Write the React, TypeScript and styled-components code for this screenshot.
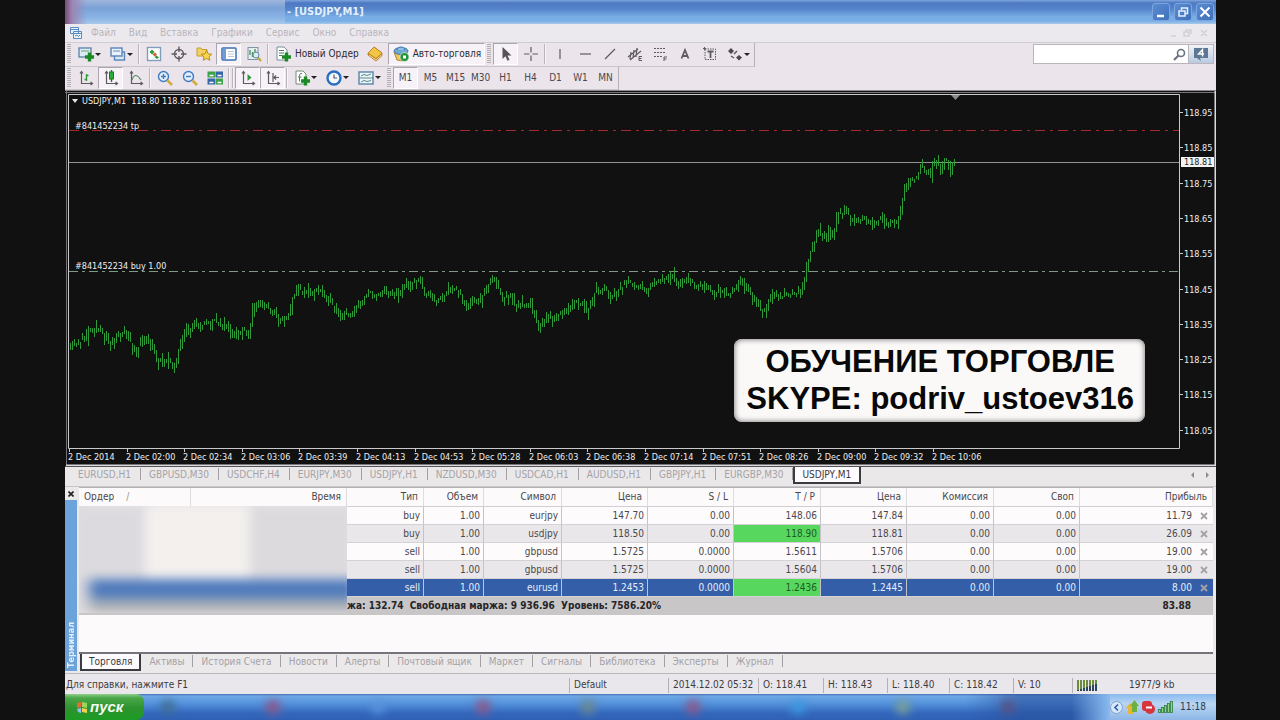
import React from "react";
import styled, { createGlobalStyle, css } from "styled-components";

const ui = `"DejaVu Sans Condensed", "DejaVu Sans", sans-serif`;

const GlobalStyle = createGlobalStyle`
  * { box-sizing: border-box; }
  body { margin: 0; background: #111; }
  button, input { font: inherit; color: inherit; }
`;

const Desktop = styled.div`
  min-height: 100vh;
  display: flex;
  flex-direction: column;
  padding: 0 64px 0 65px;
  background: #111112;
  font: 10px/14px ${ui};
  color: #4a474d;
`;

/* ---------- title bar and menu ---------- */

const TitleBar = styled.header`
  display: flex;
  align-items: center;
  height: 24px;
  padding-right: 2px;
  background: linear-gradient(#7ea5dc 0, #4d79c3 3px, #5584cb 9px, #79aee5 17px, #78afe6 21px, #a9c8ea 24px);
`;

const HiddenCaption = styled.div`
  width: 220px;
  height: 24px;
  background: linear-gradient(90deg, #7a4a78 0, #9c86b2 7px, transparent 22px),
    linear-gradient(#9fb6dc 0, #7ba1d8 8px, #8ab5e6 18px, #a9c8ea 24px);
`;

const Caption = styled.h1`
  flex: 1;
  margin: 0;
  padding-left: 2px;
  font: bold 11px/22px ${ui};
  color: #e4f0fd;
`;

const CaptionButton = styled.button`
  display: grid;
  place-items: center;
  width: 18px;
  height: 18px;
  margin-left: 4px;
  padding: 0;
  border: 1px solid #7da6df;
  border-radius: 3px;
  background: linear-gradient(135deg, #5b8bd2, #3f70bb);
`;

const MenuBar = styled.nav`
  display: flex;
  align-items: center;
  height: 19px;
  padding: 0 8px 0 4px;
  background: #ece9ee;
  border-bottom: 1px solid #cfccd2;
`;

const MenuItem = styled.button`
  margin-left: 3px;
  padding: 0 5px;
  border: 0;
  background: none;
  color: #b9b5bc;
  line-height: 16px;
`;

const ChildControls = styled.div`
  display: flex;
  gap: 8px;
  margin-left: auto;
  color: #d3d0d5;
`;

/* ---------- toolbars ---------- */

const ToolArea = styled.div`
  display: flex;
  justify-content: space-between;
  height: 48px;
  background: #ebe5eb;
  border-bottom: 1px solid #8d8a90;
`;

const ToolRows = styled.div`
  display: flex;
  flex-direction: column;
  align-items: flex-start;
`;

const ToolRow = styled.div`
  display: flex;
  align-items: center;
  height: 24px;
  border-right: 1px solid #b5b1b7;
  border-bottom: 1px solid #c9c5cb;
`;

const Grip = styled.span`
  width: 8px;
  height: 20px;
  border: solid #ebe5eb;
  border-width: 0 2px;
  background: repeating-linear-gradient(#b3afb5 0 1px, #ebe5eb 1px 2px);
`;

const Divider = styled.span`
  width: 2px;
  height: 20px;
  margin: 0 1px;
  border-left: 1px solid #b9b5bb;
  border-right: 1px solid #f8f5f9;
`;

const ToolButton = styled.button<{ $wide?: boolean; $pressed?: boolean }>`
  display: flex;
  align-items: center;
  justify-content: ${(p) => (p.$wide ? "flex-start" : "center")};
  width: ${(p) => (p.$wide ? 32 : 25)}px;
  height: 22px;
  padding: 0 0 0 ${(p) => (p.$wide ? 3 : 0)}px;
  border: 1px solid transparent;
  background: none;
  ${(p) =>
    p.$pressed &&
    css`
      background: #f6f2f7;
      border-color: #aaa6ad #fff #fff #aaa6ad;
    `}
`;

const LabelButton = styled(ToolButton)`
  width: auto;
  gap: 3px;
  padding: 0 3px;
  white-space: nowrap;
  color: #2e2b30;
`;

const Caret = styled.span`
  border: 3px solid transparent;
  border-top-color: #222;
  border-bottom: 0;
`;

const SearchGroup = styled.form`
  display: flex;
  align-items: center;
  height: 20px;
  margin: 1px 2px 0 0;
  background: #fff;
  border: 1px solid #b9b5bb;
`;

const SearchInput = styled.input`
  width: 137px;
  height: 18px;
  padding: 0 4px;
  border: 0;
  outline: 0;
  background: none;
`;

const SearchButton = styled.button`
  display: grid;
  place-items: center;
  width: 17px;
  height: 18px;
  padding: 0;
  border: 0;
  background: none;
`;

const NewsButton = styled(SearchButton)`
  width: 25px;
  border-left: 1px solid #b9b5bb;
  background: linear-gradient(#f1f3f8, #b9cbe2);
`;

/* ---------- chart ---------- */

const ChartPane = styled.section`
  position: relative;
  background: #111112;
`;

const ChartSvg = styled.svg`
  display: block;
  width: 100%;
  font: 9px ${ui};
`;

const Banner = styled.aside`
  position: absolute;
  right: 71px;
  bottom: 44px;
  padding: 4px 11px 5px 12px;
  border-radius: 8px;
  background: #fbf8f8;
  box-shadow: inset 0 0 5px 1px #8e8b8b;
  font: bold 31px/37px "Liberation Sans", Arial, sans-serif;
  color: #080808;
  text-align: center;
  white-space: nowrap;
`;

/* ---------- tabs ---------- */

const Tab = styled.button<{ $active?: boolean }>`
  position: relative;
  height: 15px;
  padding: 0 9px 0 8px;
  border: 0;
  background: none;
  line-height: 14px;
  white-space: nowrap;
  color: #a5a2a7;
  &::after {
    content: "";
    position: absolute;
    right: 0;
    top: 1px;
    height: 12px;
    border-right: 1px solid #a3a0a5;
  }
  ${(p) =>
    p.$active &&
    css`
      height: 17px;
      padding: 0 7px;
      background: #fdfbfd;
      border: solid #3d3b42;
      border-width: 0 2px 2px;
      color: #3c393f;
      &::after {
        content: none;
      }
    `}
`;

const ChartTabs = styled.div`
  display: flex;
  height: 21px;
  padding-left: 5px;
  background: #eae8e9;
  border-top: 1px solid #55535a;
  border-bottom: 1px solid #c8c6c8;
  & > ${Tab} {
    padding-right: 10px;
  }
  & > ${Tab}:last-of-type {
    padding-right: 8px;
  }
`;

const Scrollers = styled.div`
  display: flex;
  gap: 10px;
  margin: 4px 6px 0 auto;
`;

/* ---------- terminal ---------- */

const Terminal = styled.section`
  display: flex;
  height: 187px;
  background: #ebe9ea;
  border-bottom: 1px solid #bab8bb;
`;

const Rail = styled.div`
  display: flex;
  flex-direction: column;
  width: 12px;
  margin: 0 2px 2px 0;
`;

const RailClose = styled.button`
  display: grid;
  place-items: center;
  height: 13px;
  padding: 0;
  border: 0;
  background: none;
`;

const RailTitle = styled.h2`
  flex: 1;
  margin: 0;
  padding-top: 3px;
  background: #6ba3da;
  color: #e3effb;
  font: bold 9px/12px ${ui};
  writing-mode: vertical-rl;
  transform: rotate(180deg);
`;

const TerminalBody = styled.div`
  flex: 1;
  display: flex;
  flex-direction: column;
  min-width: 0;
  margin-right: 3px;
  border-top: 1px solid #b5b2b6;
`;

const TableArea = styled.div`
  position: relative;
  flex: 1;
  background: #fcfafa;
`;

const Table = styled.table`
  width: 100%;
  table-layout: fixed;
  border-collapse: separate;
  border-spacing: 0;
`;

const HeadCell = styled.th<{ $left?: boolean }>`
  height: 19px;
  padding: 0 5px;
  border-right: 1px solid #e0dde0;
  border-bottom: 1px solid #d2cfd2;
  font-weight: normal;
  text-align: ${(p) => (p.$left ? "left" : "right")};
  white-space: nowrap;
`;

const SortMark = styled.span`
  margin-left: 12px;
  color: #98959a;
`;

const Row = styled.tr<{ $selected?: boolean }>`
  background: #fdfbfc;
  &:nth-child(even) {
    background: #e9e7e9;
  }
  ${(p) =>
    p.$selected &&
    css`
      && {
        background: #355ea8;
      }
      color: #e6eefb;
    `}
`;

const Cell = styled.td<{ $hit?: boolean }>`
  height: 18px;
  padding: 0 3px;
  border-right: 1px solid #c6c3c7;
  border-bottom: 1px solid #d5d2d5;
  text-align: right;
  white-space: nowrap;
  ${(p) =>
    p.$hit &&
    css`
      background: #57d75d;
      color: #1d5b26;
    `}
  &:last-child {
    border-right: 0;
  }
`;

const ProfitLine = styled.div`
  display: flex;
  align-items: center;
  justify-content: flex-end;
  gap: 8px;
  padding-right: 2px;
`;

const CloseOrder = styled.button`
  display: grid;
  place-items: center;
  padding: 0;
  border: 0;
  background: none;
`;

const TotalCell = styled.td`
  height: 18px;
  padding: 0;
  background: #c8c6c7;
  color: #262428;
  font-weight: bold;
  white-space: nowrap;
`;

const TotalProfit = styled(TotalCell)`
  padding-right: 22px;
  text-align: right;
`;

const Redaction = styled.div`
  position: absolute;
  left: 0;
  top: 18px;
  width: 23.6%;
  height: 107px;
  overflow: hidden;
  background: #e6e3e6;
`;

const RedactionFill = styled.div`
  height: 100%;
  margin: 0 -6px;
  filter: blur(5px);
  background: linear-gradient(90deg, #dcdade 8px, transparent 24px),
    linear-gradient(
      transparent 70px,
      #5f86c3 75px,
      #4673b8 86px,
      #7b96be 93px,
      #a9adb4 97px,
      #b9b9ba 107px
    ),
    linear-gradient(90deg, #dcdade 0 68px, #f3f0ee 76px 172px, #dddade 182px);
`;

const TerminalTabs = styled.div`
  display: flex;
  height: 21px;
  padding-left: 1px;
  border-top: 2px solid #76737a;
`;

/* ---------- status bar ---------- */

const StatusBar = styled.footer`
  display: flex;
  align-items: center;
  height: 20px;
  padding-top: 2px;
  background: #e9e7ec;
  color: #3d3b40;
`;

const StatusCell = styled.div<{ $width?: number }>`
  display: flex;
  align-items: center;
  height: 15px;
  flex: ${(p) => (p.$width ? `0 0 ${p.$width}px` : "1")};
  padding-left: ${(p) => (p.$width ? 4 : 1)}px;
  border-left: ${(p) => (p.$width ? "1px solid #b4b1b6" : "0")};
  white-space: nowrap;
`;

/* ---------- task bar ---------- */

const TaskBar = styled.div`
  display: flex;
  height: 26px;
  background: linear-gradient(#4470b4 0, #6fa8e6 2px, #5593dc 9px, #3468bd 19px, #2f60b4 26px);
`;

const StartButton = styled.button`
  display: flex;
  align-items: center;
  gap: 3px;
  width: 79px;
  padding: 0 0 0 12px;
  border: 0;
  border-radius: 0 8px 8px 0;
  background: linear-gradient(#8fce8b 0, #4aa748 4px, #2e9230 14px, #1b9c22 26px);
  color: #f3fbf0;
  font: italic bold 15px/24px "Liberation Sans", Arial, sans-serif;
`;

const TaskItems = styled.div`
  display: flex;
  flex: 1;
  align-items: center;
  gap: 91px;
  padding-left: 17px;
  overflow: hidden;
  background: linear-gradient(90deg, transparent 85%, #27509c99 91%, #27509c99 96%, #8abaf0 100%);
`;

const TaskBlur = styled.span<{ $color: string }>`
  flex: none;
  width: 14px;
  height: 14px;
  border-radius: 7px;
  background: ${(p) => p.$color};
  filter: blur(5px);
`;

const Tray = styled.div`
  display: flex;
  align-items: center;
  gap: 3px;
  padding-right: 10px;
  background: linear-gradient(#8abaf0, #b9d6f3 10px, #8db6e6 26px);
  color: #2c3a52;
`;

const TrayClock = styled.time`
  margin-left: 4px;
`;

/* ---------- icons ---------- */

const Icon = ({ children, size = 18 }: { children: React.ReactNode; size?: number }) => (
  <svg width={size} height={size} viewBox="0 0 18 18" fill="none" stroke="#5d5a60" strokeWidth="1.4" aria-hidden="true">
    {children}
  </svg>
);

const plus = <path d="M12.5 7.5v9M8 12h9" stroke="#1b8a25" strokeWidth="3.4" />;
const axes = <path d="M4.5 3v11.500H15M3 4.500l1.500-2 1.500 2M13.500 13l2 1.500-2 1.500" strokeWidth="1.200" />;

const icons: Record<string, React.ReactNode> = {
  newChart: <Icon><rect x="2" y="3" width="12" height="9" fill="#dcebf8" stroke="#6189ac" /><path d="M4 6h8" stroke="#8fb48f" />{plus}</Icon>,
  profiles: <Icon><rect x="5.500" y="7" width="10" height="8" fill="#dbe8f5" stroke="#5b84b5" /><rect x="2" y="3" width="11" height="8" fill="#eaf2fb" stroke="#5b84b5" /><path d="M4 6h7" stroke="#8aa9cc" /></Icon>,
  market: <Icon><rect x="2.500" y="2.500" width="13" height="13" fill="#fff" stroke="#7f9dbd" /><path d="M4.500 7l2.500-2.500L9.500 7 7 9.500z" fill="#2c9a3a" stroke="none" /><path d="M7.500 9.500l2.500-2 2 2-2 2z" fill="#d65a34" stroke="none" /><path d="M9.500 12l2-1.500 2.500 2-2 1.500z" fill="#2c9a3a" stroke="none" /></Icon>,
  crosshair: <Icon><circle cx="9" cy="9" r="4.500" /><path d="M9 1.500v5.500M9 11v5.500M1.500 9H7M11 9h5.500" /></Icon>,
  navigator: <Icon><path d="M2 3h4l1 1.500h5V11H2z" fill="#f3d264" stroke="#c99d2a" strokeWidth="1" /><path d="M11.500 5.500l1.600 3.300 3.600.4-2.600 2.500.7 3.600-3.300-1.800-3.300 1.800.7-3.600-2.600-2.500 3.600-.4z" fill="#f7d548" stroke="#b98d1f" strokeWidth="1" /></Icon>,
  terminal: <Icon><rect x="2" y="3" width="14" height="12" rx="1" fill="#fff" stroke="#3a6fb4" strokeWidth="1.500" /><path d="M3 3.500h3v11H3z" fill="#6d9cd6" stroke="none" /><path d="M8 6.500h6M8 9h6M8 11.500h6" stroke="#b8c6d6" strokeWidth="1" /></Icon>,
  tester: <Icon><rect x="3" y="2.500" width="10" height="12" fill="#e8eef0" stroke="#7f95a5" strokeWidth="1" /><path d="M5 5v5M7.500 7v5M10 4v4" stroke="#4c9a63" /><circle cx="11" cy="10" r="3" stroke="#5f88a8" fill="#dbeaf4" strokeWidth="1" /><path d="M13 12.500l3 3.500" stroke="#c4a23c" strokeWidth="2" /></Icon>,
  newOrder: <Icon><path d="M3 2h7l3 3v10H3z" fill="#fff" stroke="#7b8c9c" strokeWidth="1" /><path d="M5 5.500h5M5 8h5M5 10.500h3" stroke="#4f7c60" strokeWidth="1" />{plus}</Icon>,
  editor: <Icon><path d="M2 10V8l6-6 8 6v2.500L10 16z" fill="#c98a1e" stroke="#a9741b" strokeWidth=".8" /><path d="M2 8l6-6 8 6-6 5.500z" fill="#f3c545" stroke="#b98222" strokeWidth=".8" /><path d="M3 10l7 5 5.500-5" stroke="#fff0b2" strokeWidth=".8" /></Icon>,
  auto: <Icon><path d="M2 7l3 8 6 1 4-9" fill="#e9c659" stroke="#b3872c" strokeWidth="1" /><ellipse cx="9" cy="6" rx="7" ry="3.500" fill="#6fa9d4" stroke="#3b78a8" strokeWidth="1" /><path d="M5 5c1-4 7-4 8 0" fill="#8cc0e4" stroke="#3b78a8" strokeWidth="1" /><circle cx="12.500" cy="12" r="4.500" fill="#23943a" stroke="#fff" strokeWidth=".6" /><rect x="11" y="10.500" width="3" height="3" fill="#fff" stroke="none" /></Icon>,
  cursor: <Icon><path d="M5.500 2v12l3-2.800 2 4.600 2-1-2-4.300h4z" fill="#55525a" stroke="none" /></Icon>,
  cross: <Icon><path d="M9 2v5.500M9 10.500V16M2 9h5.500M10.500 9H16" strokeWidth="1.200" /></Icon>,
  vline: <Icon><path d="M9 4v10" strokeWidth="1.200" /></Icon>,
  hline: <Icon><path d="M4 9h11" strokeWidth="1.200" /></Icon>,
  trend: <Icon><path d="M4 14L14 4" strokeWidth="1.200" /></Icon>,
  channel: <Icon><path d="M2 12l10-8M4 15l11-9M5 7l-1 7M8 5l-1 8M11 3l-1 9" strokeWidth="1.200" /><path d="M16 11.500h-3v4h3M13 13.500h2.500" strokeWidth="1" /></Icon>,
  fibo: <Icon><path d="M3 3.500h12M3 7.500h12M3 11.500h8" strokeDasharray="2 1" strokeWidth="1.200" /><path d="M13 16v-4h3M13 14h2.500" strokeWidth="1" /></Icon>,
  text: <Icon><path d="M5.500 13.500L9 5l3.500 8.500M6.800 11h4.400" strokeWidth="1.800" /></Icon>,
  label: <Icon><rect x="4" y="4" width="10.500" height="10.500" strokeDasharray="1.500 1" strokeWidth="1" /><path d="M6.500 6.500h6M9.500 6.500v6.500" strokeWidth="1.800" /><path d="M2 3.500h3M3.500 2v3" strokeWidth="1" /></Icon>,
  arrows: <Icon><path d="M5 3l3 3-3 3-3-3zM13 10l3 2.500-3 3-3-3z" fill="#4b484e" stroke="none" /><path d="M8 9l3-3M5 11l3 2" strokeWidth="1.500" /></Icon>,
  bars: <Icon>{axes}<path d="M9.500 5v7M7.500 10.500h2M9.500 6.500h2" stroke="#2c9a3a" /></Icon>,
  candles: <Icon>{axes}<path d="M9.500 1v12" stroke="#1b7a25" /><rect x="7.500" y="3" width="4" height="7" fill="#2cab3a" stroke="#1b7a25" strokeWidth="1" /></Icon>,
  line: <Icon>{axes}<path d="M5 11c2-6 5-6 9 0" stroke="#5c8a66" strokeWidth="1.200" /></Icon>,
  zoomIn: <Icon><circle cx="7.500" cy="7.500" r="5" fill="#e2eefb" stroke="#3f7cc2" /><path d="M7.500 5v5M5 7.500h5" stroke="#3f7cc2" /><path d="M11.500 11.500l4.500 4.500" stroke="#d3aa3c" strokeWidth="2.500" /></Icon>,
  zoomOut: <Icon><circle cx="7.500" cy="7.500" r="5" fill="#e2eefb" stroke="#3f7cc2" /><path d="M5 7.500h5" stroke="#3f7cc2" /><path d="M11.500 11.500l4.500 4.500" stroke="#d3aa3c" strokeWidth="2.500" /></Icon>,
  tile: <Icon><path d="M1.500 2.500H9v6H1.500zM9.500 9.500H17v6H9.500z" fill="#3da04a" stroke="none" /><path d="M9.500 2.500H17v6H9.500zM1.500 9.500H9v6H1.500z" fill="#3767a8" stroke="none" /><path d="M3.500 6.500h4M11.500 6.500h4M3.500 13.500h4M11.500 13.500h4" stroke="#fff" strokeWidth="1.500" /></Icon>,
  scroll: <Icon>{axes}<path d="M8.500 5v7l4-3.500z" fill="#2c9a3a" stroke="none" /></Icon>,
  shift: <Icon>{axes}<path d="M9 4v9M10 8.500h5M12 6.500l-2 2 2 2" strokeWidth="1.200" /></Icon>,
  indicators: <Icon><path d="M3 2h7l3 3v10H3z" fill="#fff" stroke="#6e8d76" strokeWidth="1" /><path d="M9 4.500c-2-.5-2.500 1-2.500 3v5M5 8h3.500" stroke="#4f7c60" strokeWidth="1" />{plus}</Icon>,
  clock: <Icon><circle cx="9" cy="9" r="6.500" fill="#f4f9ff" stroke="#2b6fc0" strokeWidth="2.400" /><path d="M9 5.500V9h3" strokeWidth="1.200" /></Icon>,
  template: <Icon><rect x="2" y="3" width="14" height="12" fill="#eef5fb" stroke="#5a86a8" /><path d="M2 9h14M4 7l3-1.500 3 1 4-1.500M4 13l3-1.500 3 1 4-1" stroke="#5a8a8a" strokeWidth="1" /></Icon>,
};

type Tool = { id: string; label: string; wide?: boolean; pressed?: boolean };
const t = (id: string, label: string, opts: Partial<Tool> = {}): Tool => ({ id, label, ...opts });

const Tools = ({ items }: { items: Tool[] }) => (
  <>
    {items.map((i) => (
      <ToolButton key={i.id} aria-label={i.label} $wide={i.wide} $pressed={i.pressed}>
        {icons[i.id]}
        {i.wide && <Caret />}
      </ToolButton>
    ))}
  </>
);

const periods = ["M1", "M5", "M15", "M30", "H1", "H4", "D1", "W1", "MN"];

/* ---------- chart data ---------- */

const path: [number, number][] = [
  [70, 352], [75, 343], [81, 342], [87, 338], [90, 331], [97, 329], [105, 333], [113, 343], [120, 335], [127, 331],
  [132, 342], [138, 352], [143, 342], [148, 342], [155, 352], [160, 362], [168, 360], [174, 367], [178, 358],
  [185, 335], [193, 328], [197, 321], [203, 325], [213, 322], [223, 323], [230, 329], [234, 337], [240, 331],
  [251, 333], [253, 313], [258, 303], [268, 306], [275, 313], [282, 320], [291, 315], [294, 295], [300, 291],
  [310, 292], [325, 292], [332, 303], [340, 315], [353, 314], [360, 305], [367, 295], [393, 293], [400, 293],
  [408, 284], [421, 281], [427, 295], [440, 300], [447, 295], [455, 289], [460, 292], [468, 305], [475, 300],
  [479, 306], [483, 295], [495, 277], [503, 297], [513, 298], [518, 308], [530, 303], [537, 318], [542, 328],
  [547, 320], [555, 317], [567, 313], [573, 303], [583, 305], [588, 313], [597, 290], [607, 290], [614, 297],
  [622, 288], [628, 283], [640, 285], [648, 290], [657, 282], [668, 280], [673, 273], [678, 283], [685, 278],
  [697, 287], [705, 283], [717, 293], [730, 293], [745, 283], [755, 298], [765, 313], [773, 295], [785, 297],
  [800, 293], [805, 283], [807, 268], [813, 250], [821, 230], [827, 238], [830, 230], [835, 237], [837, 217],
  [846, 210], [853, 220], [865, 217], [872, 225], [882, 220], [890, 225], [898, 225], [903, 202], [907, 182],
  [913, 177], [918, 178], [922, 165], [927, 173], [932, 175], [934, 160], [939, 162], [942, 172], [947, 158],
  [952, 172], [954, 163],
];

const priceAt = (x: number) => {
  const i = Math.max(1, path.findIndex((p) => p[0] >= x));
  const [x0, y0] = path[i - 1];
  const [x1, y1] = path[i];
  return y0 + ((y1 - y0) * (x - x0)) / (x1 - x0);
};

const buildBars = () => {
  let seed = 11;
  const rnd = () => (seed = (seed * 16807) % 2147483647) / 2147483647;
  let d = "";
  for (let x = 70; x <= 954; x += 2) {
    const drift = (rnd() - 0.5) * 6;
    const a = priceAt(x) + drift;
    const b = priceAt(Math.min(954, x + 2)) + drift;
    const hi = Math.min(a, b) - 1 - rnd() * rnd() * 9;
    const lo = Math.max(a, b) + 1 + rnd() * rnd() * 9;
    d += `M${x}.5 ${Math.round(hi)}V${Math.round(lo)}`;
  }
  return d;
};
const bars = buildBars();

const prices = ["118.95", "118.85", "118.75", "118.65", "118.55", "118.45", "118.35", "118.25", "118.15", "118.05"];
const times = ["2014", "02:00", "02:34", "03:06", "03:39", "04:13", "04:53", "05:28", "06:03", "06:38", "07:14", "07:51", "08:26", "09:00", "09:32", "10:06"];

const Chart = () => (
  <ChartSvg viewBox="65 91 1151 375" role="img" aria-label="USDJPY M1">
    <rect x="65" y="91" width="1151" height="375" fill="#111112" />
    <path d="M66.500 91V466M65 92.500H1216" stroke="#77757a" fill="none" />
    <path d="M1215.500 91V465.500H66" stroke="#dcdadd" strokeWidth="2" fill="none" />
    <path d="M68.500 94.500H1179.500V448.500H68.500Z" stroke="#c9c8ca" fill="none" />
    <path d="M69 130.500H1179" stroke="#a52a30" strokeDasharray="10 5 3 5" />
    <path d="M69 162.500H1179" stroke="#8f9391" />
    <path d="M69 271.500H1179" stroke="#7c9a84" strokeDasharray="9 4 3 4" />
    <path d={bars} stroke="#309a3a" fill="none" />
    <path d="M72 99h6l-3 4z" fill="#e8e8e8" />
    <path d="M951 95h9l-4.500 5z" fill="#8b8b8d" />
    <g fill="#eeeeee">
      <text x="82" y="104">USDJPY,M1&nbsp; 118.80 118.82 118.80 118.81</text>
      <text x="75" y="129">#841452234 tp</text>
      <text x="75" y="269">#841452234 buy 1.00</text>
      {prices.map((p, i) => (
        <text key={p} x="1184" y={116 + Math.round(i * 35.3)}>{p}</text>
      ))}
      {times.map((s, i) => (
        <text key={s} x={68 + Math.round(i * 57.6)} y="460">2 Dec {s}</text>
      ))}
    </g>
    {prices.map((p, i) => (
      <path key={p} d={`M1180 ${112.5 + Math.round(i * 35.3)}h3`} stroke="#c9c8ca" />
    ))}
    {times.map((s, i) => (
      <path key={s} d={`M${69.5 + Math.round(i * 57.6)} 449v3`} stroke="#c9c8ca" />
    ))}
    <rect x="1181" y="157" width="33" height="10" fill="#f2f2f2" />
    <text x="1184" y="165" fill="#222">118.81</text>
  </ChartSvg>
);

/* ---------- terminal data ---------- */

const columns: [string, number][] = [
  ["Ордер", 112], ["Время", 156], ["Тип", 77], ["Объем", 60], ["Символ", 78], ["Цена", 86], ["S / L", 86],
  ["T / P", 87], ["Цена", 86], ["Комиссия", 87], ["Своп", 86], ["Прибыль", 133],
];

const orders = [
  { cells: ["buy", "1.00", "eurjpy", "147.70", "0.00", "148.06", "147.84", "0.00", "0.00"], profit: "11.79" },
  { cells: ["buy", "1.00", "usdjpy", "118.50", "0.00", "118.90", "118.81", "0.00", "0.00"], profit: "26.09", hit: true },
  { cells: ["sell", "1.00", "gbpusd", "1.5725", "0.0000", "1.5611", "1.5706", "0.00", "0.00"], profit: "19.00" },
  { cells: ["sell", "1.00", "gbpusd", "1.5725", "0.0000", "1.5604", "1.5706", "0.00", "0.00"], profit: "19.00" },
  { cells: ["sell", "1.00", "eurusd", "1.2453", "0.0000", "1.2436", "1.2445", "0.00", "0.00"], profit: "8.00", hit: true, selected: true },
];

const OrdersTable = () => (
  <Table>
    <colgroup>
      {columns.map(([, w], i) => (
        <col key={i} width={w} />
      ))}
    </colgroup>
    <thead>
      <tr>
        {columns.map(([name], i) => (
          <HeadCell key={i} $left={i === 0}>
            {name}
            {i === 0 && <SortMark>/</SortMark>}
          </HeadCell>
        ))}
      </tr>
    </thead>
    <tbody>
      {orders.map((o, r) => (
        <Row key={r} $selected={o.selected}>
          <Cell />
          <Cell />
          {o.cells.map((c, i) => (
            <Cell key={i} $hit={o.hit && i === 5}>{c}</Cell>
          ))}
          <Cell>
            <ProfitLine>
              {o.profit}
              <CloseOrder aria-label="Закрыть ордер">
                <svg width="8" height="8" viewBox="0 0 8 8" stroke="#a5a2a7" strokeWidth="1.800"><path d="M1 1l6 6M7 1L1 7" /></svg>
              </CloseOrder>
            </ProfitLine>
          </Cell>
        </Row>
      ))}
      <tr>
        <TotalCell colSpan={2} />
        <TotalCell colSpan={9}>жа: 132.74&nbsp; Свободная маржа: 9 936.96&nbsp; Уровень: 7586.20%</TotalCell>
        <TotalProfit>83.88</TotalProfit>
      </tr>
    </tbody>
  </Table>
);

const chartTabs = ["EURUSD,H1", "GBPUSD,M30", "USDCHF,H4", "EURJPY,M30", "USDJPY,H1", "NZDUSD,M30", "USDCAD,H1", "AUDUSD,H1", "GBPJPY,H1", "EURGBP,M30", "USDJPY,M1"];
const terminalTabs = ["Торговля", "Активы", "История Счета", "Новости", "Алерты", "Почтовый ящик", "Маркет", "Сигналы", "Библиотека", "Эксперты", "Журнал"];
const statusCells: [string, number][] = [["Default", 99], ["2014.12.02 05:32", 90], ["O: 118.41", 65], ["H: 118.43", 64], ["L: 118.40", 62], ["C: 118.42", 64], ["V: 10", 59]];
const taskColors = ["#3f6c8c", "#96527f", "#5b93dc", "#96527f", "#6f8a86", "#96527f", "#3b9be2", "#7fa28e", "#5a4f7c"];

export default function App() {
  return (
    <Desktop>
      <GlobalStyle />
      <TitleBar>
        <HiddenCaption />
        <Caption>- [USDJPY,M1]</Caption>
        <CaptionButton aria-label="Свернуть">
          <svg width="12" height="12" stroke="#fff" strokeWidth="2.500"><path d="M2 10h7" /></svg>
        </CaptionButton>
        <CaptionButton aria-label="Восстановить">
          <svg width="12" height="12" stroke="#e6f0fc" strokeWidth="1.500" fill="none"><path d="M4.500 4V2h6v5.500H8M2 5h6v5H2z" /></svg>
        </CaptionButton>
        <CaptionButton aria-label="Закрыть">
          <svg width="12" height="12" stroke="#fff" strokeWidth="2"><path d="M1.500 1.500l9 9M10.500 1.500l-9 9" /></svg>
        </CaptionButton>
      </TitleBar>

      <MenuBar>
        <svg width="14" height="14" viewBox="0 0 14 14" fill="#eaf2fb" stroke="#5b8ac2" aria-hidden="true">
          <path d="M1.500 1.500h8v6h-8zM4.500 5.500h8v7h-8zM1.500 3.500h8M4.500 7.500h8M6 10l2-1 1.500 1.500L11 9" />
        </svg>
        {["Файл", "Вид", "Вставка", "Графики", "Сервис", "Окно", "Справка"].map((m) => (
          <MenuItem key={m}>{m}</MenuItem>
        ))}
        <ChildControls>
          <svg width="38" height="8" fill="none" stroke="#d3d0d5" strokeWidth="1.500" aria-hidden="true">
            <path d="M1 7h5M16 3V1h5v4M14 3h5v4h-5zM31 1l6 6M37 1l-6 6" />
          </svg>
        </ChildControls>
      </MenuBar>

      <ToolArea>
        <ToolRows>
          <ToolRow>
            <Grip />
            <Tools items={[t("newChart", "Новый график", { wide: true }), t("profiles", "Профили", { wide: true })]} />
            <Divider />
            <Tools items={[t("market", "Обзор рынка"), t("crosshair", "Окно данных"), t("navigator", "Навигатор"), t("terminal", "Терминал", { pressed: true }), t("tester", "Тестер")]} />
            <Divider />
            <LabelButton>{icons.newOrder}Новый Ордер</LabelButton>
            <Tools items={[t("editor", "Редактор")]} />
            <LabelButton $pressed>{icons.auto}Авто-торговля</LabelButton>
            <Grip />
            <Tools items={[t("cursor", "Курсор", { pressed: true }), t("cross", "Перекрестие")]} />
            <Divider />
            <Tools items={[t("vline", "Вертикальная линия"), t("hline", "Горизонтальная линия"), t("trend", "Трендовая линия"), t("channel", "Канал"), t("fibo", "Фибоначчи"), t("text", "Текст"), t("label", "Метка"), t("arrows", "Стрелки", { wide: true })]} />
          </ToolRow>
          <ToolRow>
            <Grip />
            <Tools items={[t("bars", "Бары"), t("candles", "Свечи", { pressed: true }), t("line", "Линия")]} />
            <Divider />
            <Tools items={[t("zoomIn", "Увеличить"), t("zoomOut", "Уменьшить"), t("tile", "Окна")]} />
            <Divider />
            <Divider />
            <Tools items={[t("scroll", "Автопрокрутка", { pressed: true }), t("shift", "Сдвиг", { pressed: true })]} />
            <Divider />
            <Tools items={[t("indicators", "Индикаторы", { wide: true }), t("clock", "Периоды", { wide: true }), t("template", "Шаблоны", { wide: true })]} />
            <Grip />
            {periods.map((p, i) => (
              <ToolButton key={p} $pressed={i === 0}>{p}</ToolButton>
            ))}
          </ToolRow>
        </ToolRows>
        <SearchGroup onSubmit={(e) => e.preventDefault()}>
          <SearchInput aria-label="Поиск" />
          <SearchButton aria-label="Найти">
            <svg width="13" height="13" fill="none" stroke="#6a7180" strokeWidth="1.600"><circle cx="8" cy="5" r="3.500" /><path d="M5.500 7.500L1 12" strokeWidth="2.200" /></svg>
          </SearchButton>
          <NewsButton type="button" aria-label="Сообщения: 4">
            <svg width="16" height="15"><path d="M1 1h14v10H7l1 3-4-3H1z" fill="#5e7795" /><path d="M9.500 9.500v-7L5.500 7h5.500" stroke="#fff" strokeWidth="1.400" fill="none" /></svg>
          </NewsButton>
        </SearchGroup>
      </ToolArea>

      <ChartPane>
        <Chart />
        <Banner>
          ОБУЧЕНИЕ ТОРГОВЛЕ
          <br />
          SKYPE: podriv_ustoev316
        </Banner>
      </ChartPane>

      <ChartTabs>
        {chartTabs.map((c) => (
          <Tab key={c} $active={c === "USDJPY,M1"}>{c}</Tab>
        ))}
        <Scrollers>
          <svg width="20" height="8" fill="#8d8a90" aria-hidden="true"><path d="M4 1v6L1 4zM16 1v6l3-3z" /></svg>
        </Scrollers>
      </ChartTabs>

      <Terminal>
        <Rail>
          <RailClose aria-label="Закрыть терминал">
            <svg width="6" height="6" stroke="#222" strokeWidth="1.600"><path d="M.5.5l5 5M5.500.5l-5 5" /></svg>
          </RailClose>
          <RailTitle>Терминал</RailTitle>
        </Rail>
        <TerminalBody>
          <TableArea>
            <OrdersTable />
            <Redaction>
              <RedactionFill />
            </Redaction>
          </TableArea>
          <TerminalTabs>
            {terminalTabs.map((c, i) => (
              <Tab key={c} $active={i === 0}>{c}</Tab>
            ))}
          </TerminalTabs>
        </TerminalBody>
      </Terminal>

      <StatusBar>
        <StatusCell>Для справки, нажмите F1</StatusCell>
        {statusCells.map(([s, w]) => (
          <StatusCell key={s} $width={w}>{s}</StatusCell>
        ))}
        <StatusCell $width={144}>
          <svg width="52" height="11" aria-hidden="true">
            {[0, 3, 6, 9, 12, 15, 18].map((x) => (
              <g key={x}>
                <rect x={x} width="2" height="11" fill="#6d8b3c" />
                <rect x={x} y={10 - x / 3} width="2" height={1 + x / 3} fill="#2c4560" />
              </g>
            ))}
          </svg>
          1977/9 kb
        </StatusCell>
      </StatusBar>

      <TaskBar>
        <StartButton>
          <svg width="10" height="12" aria-hidden="true">
            <path d="M0 2l4-1v5L0 7z" fill="#e8683c" /><path d="M5 1l5 1v5L5 6z" fill="#9fd45c" />
            <path d="M0 8l4-1v5l-3-1z" fill="#8fc0ee" /><path d="M5 7l5 1v4l-5-1z" fill="#f5d24c" />
          </svg>
          пуск
        </StartButton>
        <TaskItems>
          {taskColors.map((c, i) => (
            <TaskBlur key={i} $color={c} />
          ))}
        </TaskItems>
        <Tray>
          <svg width="13" height="13" aria-hidden="true"><circle cx="6.500" cy="6.500" r="6" fill="#d6e7fa" stroke="#7ea3d3" /><path d="M8 3.500l-3 3 3 3" fill="none" stroke="#2c5da8" strokeWidth="1.600" /></svg>
          <svg width="13" height="14" aria-hidden="true"><path d="M2 14V8H0l4-5 4 5H7v6z" fill="#e8b534" /><path d="M6 12V6H4l4.500-6L13 6h-2v6z" fill="#6ab043" /></svg>
          <svg width="13" height="13" aria-hidden="true"><rect width="10" height="10" rx="3" fill="#d8343c" /><circle cx="8" cy="8" r="5" fill="#d8343c" /><path d="M4 6.500h6" stroke="#fff" strokeWidth="2" /></svg>
          <svg width="15" height="12" aria-hidden="true">
            {[0, 1, 2, 3, 4].map((i) => (
              <rect key={i} x={i * 3 + 0.5} y={8.500 - i * 2} width="2" height={3 + i * 2} fill="#8fd489" stroke="#2f7a3c" strokeWidth=".8" />
            ))}
          </svg>
          <TrayClock>11:18</TrayClock>
        </Tray>
      </TaskBar>
    </Desktop>
  );
}
